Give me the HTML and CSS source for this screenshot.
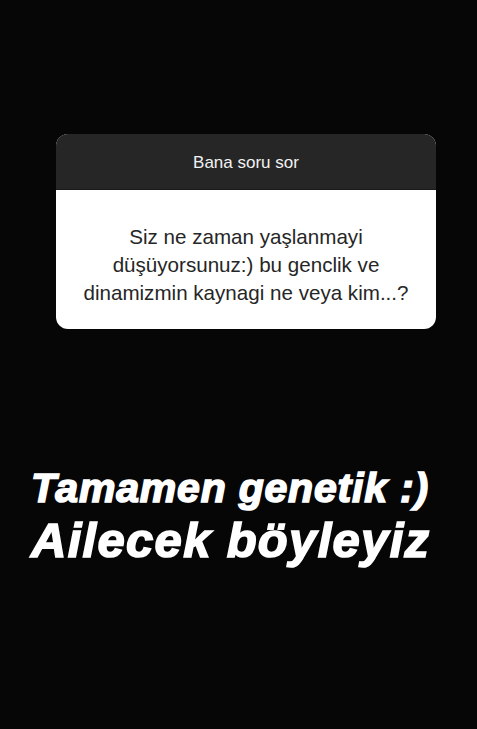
FILE: index.html
```html
<!DOCTYPE html>
<html lang="tr">
<head>
<meta charset="utf-8">
<link rel="stylesheet" href="styles.css">
</head>
<body>
<div class="story">
  <div class="card">
    <div class="card-head">Bana soru sor</div>
    <div class="card-body">Siz ne zaman yaşlanmayi<br>düşüyorsunuz:) bu genclik ve<br>dinamizmin kaynagi ne veya kim...?</div>
  </div>
  <div class="answer">
    <div class="line line-1">Tamamen genetik :)</div>
    <div class="line line-2">Ailecek böyleyiz</div>
  </div>
</div>
</body>
</html>
```
FILE: styles.css
```css
html, body {
  margin: 0;
  padding: 0;
  background: #050505;
}
.story {
  width: 477px;
  height: 729px;
  background: #060606;
  display: flex;
  flex-direction: column;
  padding-top: 134px;
  box-sizing: border-box;
}
.card {
  margin-left: 56px;
  width: 380px;
  border-radius: 12px;
  overflow: hidden;
  background: #fff;
  font-family: "Liberation Sans", Arial, sans-serif;
}
.card-head {
  background: #262626;
  color: #f2f2f2;
  height: 56px;
  display: flex;
  align-items: center;
  justify-content: center;
  font-size: 17px;
  padding-top: 2px;
  box-sizing: border-box;
  border-bottom: 1px solid #1a1a1a;
}
.card-body {
  height: 139px;
  display: flex;
  align-items: center;
  justify-content: center;
  text-align: center;
  color: #262626;
  font-size: 20.6px;
  line-height: 28px;
  padding-top: 10px;
  box-sizing: border-box;
}
.answer {
  margin-top: 135px;
  margin-left: 31px;
  color: #fff;
  font-family: "Liberation Sans", Arial, sans-serif;
  font-weight: 700;
  font-style: italic;
  -webkit-text-stroke: 1.6px #fff;
  display: flex;
  flex-direction: column;
}
.line-1 {
  font-size: 41px;
  line-height: 48px;
  letter-spacing: 0.8px;
}
.line-2 {
  font-size: 49px;
  line-height: 56px;
  letter-spacing: 1.3px;
}
```
